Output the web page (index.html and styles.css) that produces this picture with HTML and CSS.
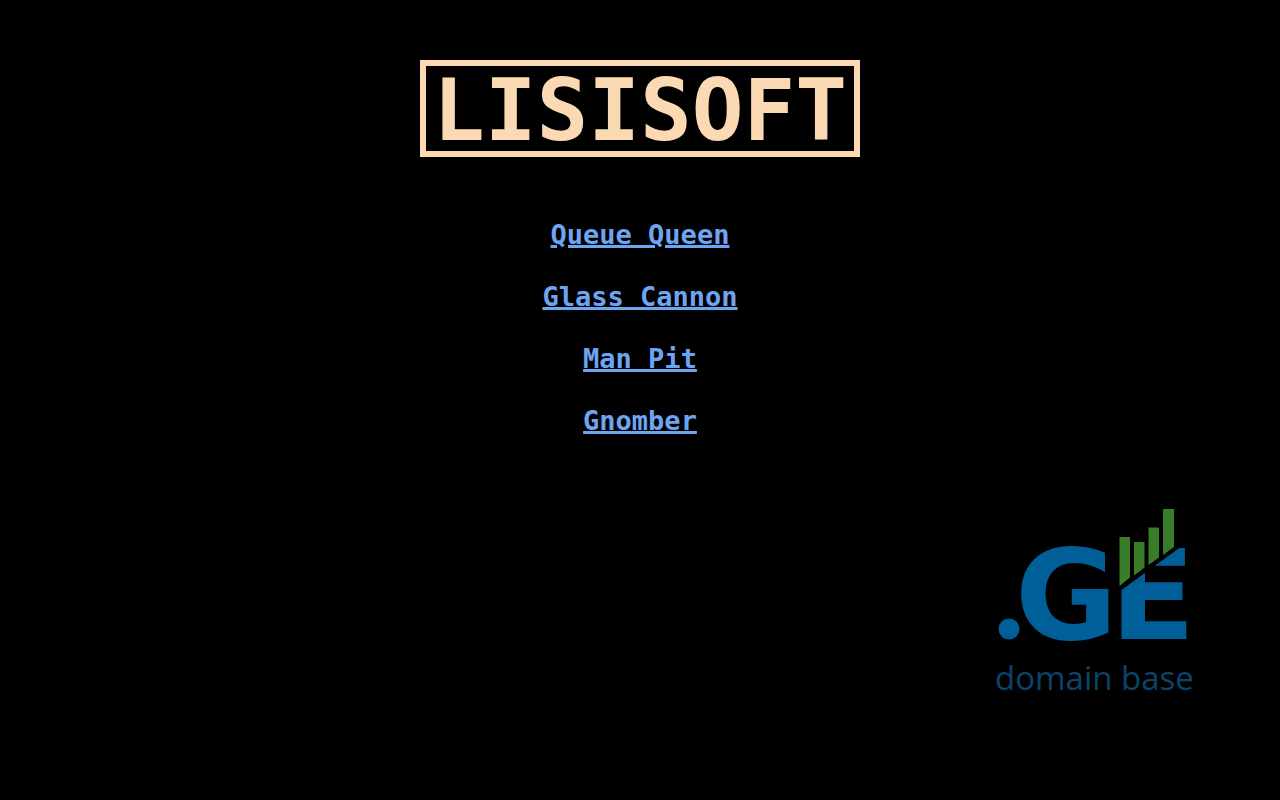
FILE: index.html
```html
<!DOCTYPE html>
<html lang="en">
<head>
<meta charset="utf-8">
<meta name="viewport" content="width=device-width, initial-scale=1">
<title>LISISOFT</title>
<link rel="stylesheet" href="styles.css">
</head>
<body>
<main class="page">
  <h1 class="title">LISISOFT</h1>
  <nav class="games">
    <a href="#queue-queen">Queue Queen</a>
    <a href="#glass-cannon">Glass Cannon</a>
    <a href="#man-pit">Man Pit</a>
    <a href="#gnomber">Gnomber</a>
  </nav>
</main>
<footer class="footer">
  <svg class="logo" viewBox="0 0 210 200" role="img" aria-label=".GE domain base">
    <circle class="blue" cx="19" cy="129" r="10.5"/>
    <text class="letter" x="25" y="139">G</text>
    <text class="letter" x="120" y="139">E</text>
    <path class="cut" d="M126 94L192 46V40H126Z"/>
    <g class="bars">
      <path d="M129.500 37H140V77.500L129.500 86Z"/>
      <path d="M144 42H154.500V67.500L144 75.500Z"/>
      <path d="M158.500 27.500H169V57.500L158.500 65Z"/>
      <path d="M173 9H184V47L173 55Z"/>
    </g>
    <text class="caption" x="5" y="190">domain base</text>
  </svg>
</footer>
</body>
</html>
```
FILE: styles.css
```css
* { box-sizing: border-box; }
body {
  margin: 0;
  min-height: 100vh;
  display: flex;
  flex-direction: column;
  background: #000;
  font-family: "DejaVu Sans Mono", "Liberation Mono", monospace;
  font-weight: bold;
}
.page {
  display: flex;
  flex-direction: column;
  align-items: center;
  gap: 62px;
  padding-top: 60px;
}
.title {
  margin: 0;
  padding: 3px 7px 0;
  border: 6px solid #fad9b3;
  color: #fad9b3;
  font-size: 86px;
  line-height: 82px;
}
.games {
  display: flex;
  flex-direction: column;
  align-items: center;
  gap: 31px;
}
.games a {
  color: #6ea5f2;
  font-size: 27px;
  line-height: 31px;
  text-decoration-thickness: 3px;
  text-underline-offset: 1px;
}
.footer {
  display: flex;
  justify-content: flex-end;
  margin-top: auto;
  padding: 0 80px 100px;
}
.logo {
  width: 210px;
  height: 200px;
}
.blue, .letter { fill: #005f98; }
.letter {
  font-family: "DejaVu Sans", sans-serif;
  font-size: 125px;
}
.cut { fill: #000; }
.bars { fill: #397d2b; }
.caption {
  fill: #0b4469;
  font-family: "Open Sans", "Noto Sans", sans-serif;
  font-size: 33px;
  font-weight: normal;
}
```
